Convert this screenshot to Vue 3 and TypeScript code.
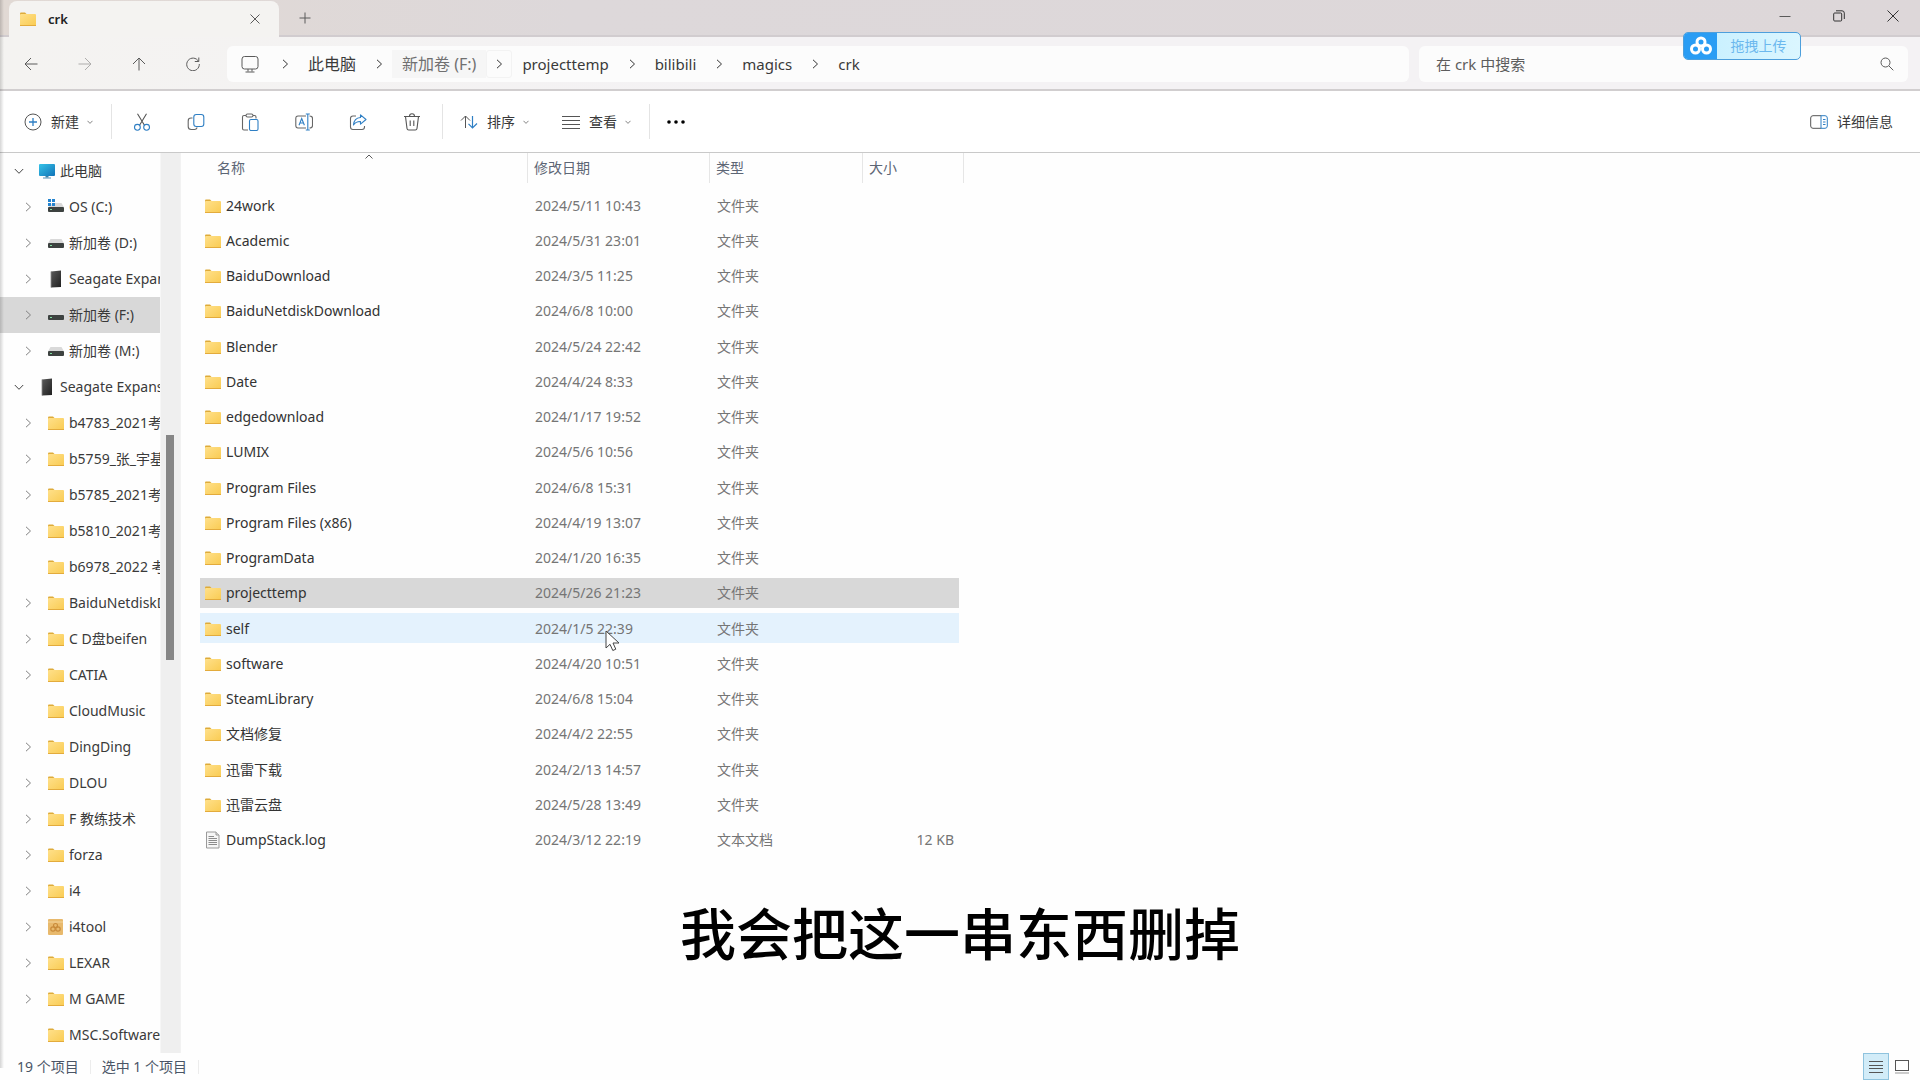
<script setup lang="ts">
import { ref } from 'vue'

interface TreeNode {
  label: string
  icon: string
  level: 1 | 2
  state: 'open' | 'closed' | 'leaf'
}

interface FileRow {
  name: string
  date: string
  type: string
  size: string
  icon: string
}

const folder = (label: string, state: 'closed' | 'leaf' = 'closed'): TreeNode => ({ label, icon: 'folder', level: 2, state })

const tree: TreeNode[] = [
  { label: '此电脑', icon: 'pc', level: 1, state: 'open' },
  { label: 'OS (C:)', icon: 'osdrive', level: 2, state: 'closed' },
  { label: '新加卷 (D:)', icon: 'drive', level: 2, state: 'closed' },
  { label: 'Seagate Expansion Drive (E:)', icon: 'external', level: 2, state: 'closed' },
  { label: '新加卷 (F:)', icon: 'drive', level: 2, state: 'closed' },
  { label: '新加卷 (M:)', icon: 'drive', level: 2, state: 'closed' },
  { label: 'Seagate Expansion Drive (E:)', icon: 'external', level: 1, state: 'open' },
  folder('b4783_2021考'),
  folder('b5759_张_宇基'),
  folder('b5785_2021考'),
  folder('b5810_2021考'),
  folder('b6978_2022 考', 'leaf'),
  folder('BaiduNetdiskDownload'),
  folder('C D盘beifen'),
  folder('CATIA'),
  folder('CloudMusic', 'leaf'),
  folder('DingDing'),
  folder('DLOU'),
  folder('F 教练技术'),
  folder('forza'),
  folder('i4'),
  { label: 'i4tool', icon: 'package', level: 2, state: 'closed' },
  folder('LEXAR'),
  folder('M GAME'),
  folder('MSC.Software', 'leaf'),
]

const dir = (name: string, date: string): FileRow => ({ name, date, type: '文件夹', size: '', icon: 'folder' })

const files: FileRow[] = [
  dir('24work', '2024/5/11 10:43'),
  dir('Academic', '2024/5/31 23:01'),
  dir('BaiduDownload', '2024/3/5 11:25'),
  dir('BaiduNetdiskDownload', '2024/6/8 10:00'),
  dir('Blender', '2024/5/24 22:42'),
  dir('Date', '2024/4/24 8:33'),
  dir('edgedownload', '2024/1/17 19:52'),
  dir('LUMIX', '2024/5/6 10:56'),
  dir('Program Files', '2024/6/8 15:31'),
  dir('Program Files (x86)', '2024/4/19 13:07'),
  dir('ProgramData', '2024/1/20 16:35'),
  dir('projecttemp', '2024/5/26 21:23'),
  dir('self', '2024/1/5 22:39'),
  dir('software', '2024/4/20 10:51'),
  dir('SteamLibrary', '2024/6/8 15:04'),
  dir('文档修复', '2024/4/2 22:55'),
  dir('迅雷下载', '2024/2/13 14:57'),
  dir('迅雷云盘', '2024/5/28 13:49'),
  { name: 'DumpStack.log', date: '2024/3/12 22:19', type: '文本文档', size: '12 KB', icon: 'text' },
]

const crumbs = [
  { label: '此电脑', cjk: true },
  { label: '新加卷 (F:)', cjk: true, hot: true },
  { label: 'projecttemp' },
  { label: 'bilibili' },
  { label: 'magics' },
  { label: 'crk' },
]

const tools = [
  { icon: 'cut', label: '剪切' },
  { icon: 'copy', label: '复制' },
  { icon: 'paste', label: '粘贴' },
  { icon: 'rename', label: '重命名' },
  { icon: 'share', label: '共享' },
  { icon: 'trash', label: '删除' },
]

const treeSelected = ref(4)
const selected = ref(11)
const hovered = ref(12)
const query = ref('')
</script>

<template>
  <div class="window">
    <svg class="defs" aria-hidden="true">
      <defs>
        <linearGradient id="gFolder" x1="0" y1="0" x2="1" y2="1">
          <stop offset="0" stop-color="#ffe08a" />
          <stop offset="1" stop-color="#f9cb52" />
        </linearGradient>
        <linearGradient id="gPc" x1="0" y1="0" x2="1" y2="1">
          <stop offset="0" stop-color="#35c3e8" />
          <stop offset="1" stop-color="#1173b8" />
        </linearGradient>
        <linearGradient id="gExt" x1="0" y1="0" x2="1" y2="1">
          <stop offset="0" stop-color="#5a5a5a" />
          <stop offset="1" stop-color="#1f1f1f" />
        </linearGradient>
      </defs>
      <symbol id="folder" viewBox="0 0 18 18">
        <path d="M1 3.500q0-1 1-1h4l1.500 1.500v3H1z" fill="#deab3a" />
        <rect x="1" y="4" width="16" height="12" rx="1" fill="url(#gFolder)" />
        <path d="M1 15.500h16" stroke="#e3ab3c" />
      </symbol>
      <symbol id="pc" viewBox="0 0 18 18">
        <rect x="1" y="2" width="16" height="12" rx="1" fill="url(#gPc)" />
        <path d="M7.500 14h3v1.500h-3z" fill="#3a7fa8" />
        <path d="M5 16h8" stroke="#5590b5" />
      </symbol>
      <symbol id="drive" viewBox="0 0 18 18">
        <path d="M3.500 5h11L17 9.500H1z" fill="#d9d9d9" />
        <rect x="1" y="9" width="16" height="5" rx="1" fill="#3d4240" />
        <rect x="3" y="11" width="2" height="1" fill="#7fe0a0" />
      </symbol>
      <symbol id="osdrive" viewBox="0 0 18 18">
        <path d="M6 5h8.500L17 9.500H1z" fill="#d9d9d9" />
        <rect x="1" y="9" width="16" height="5" rx="1" fill="#3d4240" />
        <rect x="3" y="11" width="2" height="1" fill="#7fe0a0" />
        <path d="M1 1h3v3H1zM5 1h3v3H5zM1 5h3v3H1zM5 5h3v3H5z" fill="#2484cf" />
      </symbol>
      <symbol id="external" viewBox="0 0 18 18">
        <path d="M4 1.500 14 .5v16.500l-10 .5z" fill="url(#gExt)" />
        <path d="M4 1.500v16" stroke="#8a8a8a" stroke-width=".8" />
      </symbol>
      <symbol id="package" viewBox="0 0 18 18">
        <rect x="1" y="1" width="15" height="16" rx="1" fill="#e8b96c" />
        <path d="M1 4h15" stroke="#f3d49b" />
        <g fill="none" stroke="#c88a3a" stroke-width="1.200">
          <circle cx="6" cy="11" r="2.200" /><circle cx="11" cy="11" r="2.200" /><circle cx="8.500" cy="7.500" r="2" />
        </g>
      </symbol>
      <symbol id="text" viewBox="0 0 18 18">
        <path d="M2.500 1h9.500l3 3v13H2.500z" fill="#f6f6f6" stroke="#9a9a9a" />
        <path d="M12 1v3h3" fill="#ddd" stroke="#9a9a9a" />
        <path d="M4.500 5.500h5.500M4.500 7.500h8.500M4.500 9.500h8.500M4.500 11.500h8.500M4.500 13.500h8.500" stroke="#8c8c8c" />
      </symbol>
      <symbol id="cut" viewBox="0 0 18 18">
        <path d="M4.500.8 11.600 12.500M13.500.8 6.400 12.500" stroke="#555" />
        <circle cx="4.400" cy="14.300" r="2.900" stroke="#2f7fc4" /><circle cx="13.600" cy="14.300" r="2.900" stroke="#2f7fc4" />
      </symbol>
      <symbol id="copy" viewBox="0 0 18 18">
        <path d="M5.500 5H4Q1.200 5 1.200 8v5.500q0 3 3 3h3.300q2 0 2.700-2" stroke="#666" />
        <rect x="6.800" y="1.500" width="10" height="12" rx="2.500" stroke="#2f7fc4" />
      </symbol>
      <symbol id="paste" viewBox="0 0 18 18">
        <path d="M5 2.500H3q-1.500 0-1.500 1.500v11.500q0 1.500 1.500 1.500h4M12 2.500h1.500q1.500 0 1.500 1.500v1.500" stroke="#666" />
        <rect x="5" y="1" width="7" height="3" rx="1.500" stroke="#666" />
        <rect x="8.500" y="6.500" width="8.500" height="11" rx="1.500" stroke="#2f7fc4" />
      </symbol>
      <symbol id="rename" viewBox="0 0 18 18">
        <path d="M11 3H3Q.8 3 .8 5.500v7Q.8 15 3 15h8M14.500 3q3 0 3 2.500v7q0 2.500-3 2.500" stroke="#666" />
        <path d="M12.800 1.500v15M10.800 1h4M10.800 17h4" stroke="#2f7fc4" />
        <path d="M4 12.300 6.700 5.500 9.400 12.300M5 10h3.500" stroke="#2f7fc4" />
      </symbol>
      <symbol id="share" viewBox="0 0 18 18">
        <path d="M7 3H4Q1.500 3 1.500 5.500v8.500q0 2.500 2.500 2.500h9q2.500 0 2.500-2.500v-1" stroke="#666" />
        <path d="M11.500 1.800 17 6.500l-5.500 4.700V8.500Q7 8.300 4.500 12 5 5 11.500 4.500z" stroke="#2f7fc4" stroke-linejoin="round" />
      </symbol>
      <symbol id="trash" viewBox="0 0 18 18">
        <path d="M1 3.500h16M6.500 3.200q0-2.400 2.500-2.400t2.500 2.400M2.500 3.500 4 15.500q.2 1.500 1.700 1.500h6.600q1.500 0 1.700-1.500l1.500-12M7.200 7.500v5.500M10.800 7.500v5.500" stroke="#555" />
      </symbol>
      <symbol id="chev" viewBox="0 0 10 10"><path d="M3 .8 7.500 5 3 9.200" /></symbol>
      <symbol id="chevdown" viewBox="0 0 10 10"><path d="M.8 3 5 7.300 9.200 3" /></symbol>
    </svg>

    <header class="titlebar">
      <div class="tab">
        <svg class="i18"><use href="#folder" /></svg>
        <span class="tab-name">crk</span>
        <button class="plain tab-close" aria-label="关闭标签页">
          <svg class="line" width="10" height="10" viewBox="0 0 10 10"><path d="M.5.5l9 9M9.500.5l-9 9" /></svg>
        </button>
      </div>
      <button class="plain newtab" aria-label="新标签页">
        <svg class="line" width="12" height="12" viewBox="0 0 12 12"><path d="M6 .5v11M.5 6h11" /></svg>
      </button>
      <div class="caption-buttons">
        <button class="plain" aria-label="最小化"><svg class="line" width="12" height="12" viewBox="0 0 12 12"><path d="M.5 6.500h11" /></svg></button>
        <button class="plain" aria-label="还原">
          <svg class="line dark" width="12" height="12" viewBox="0 0 12 12"><rect x=".7" y="3" width="8" height="8" rx="1" /><path d="M3 .8h6q2.300 0 2.300 2.300V9" /></svg>
        </button>
        <button class="plain" aria-label="关闭"><svg class="line dark" width="12" height="12" viewBox="0 0 12 12"><path d="M.5.5l11 11M11.500.5l-11 11" /></svg></button>
      </div>
    </header>

    <div class="navbar">
      <div class="nav-buttons">
        <button class="plain" aria-label="后退"><svg class="line" width="14" height="14" viewBox="0 0 14 14"><path d="M13.500 7H1M7 1 1 7l6 6" /></svg></button>
        <button class="plain faded" aria-label="前进"><svg class="line" width="14" height="14" viewBox="0 0 14 14"><path d="M.5 7H13M7 1l6 6-6 6" /></svg></button>
        <button class="plain" aria-label="向上"><svg class="line" width="14" height="14" viewBox="0 0 14 14"><path d="M7 13.500V1M1 7l6-6 6 6" /></svg></button>
        <button class="plain" aria-label="刷新"><svg class="line" width="14" height="14" viewBox="0 0 14 14"><path d="M12.500 4.300A6.300 6.300 0 1 0 13.300 7M12.800.5v4H8.800" /></svg></button>
      </div>
      <nav class="address" aria-label="地址栏">
        <button class="plain crumb root" aria-label="位置">
          <svg width="18" height="18" viewBox="0 0 18 18" class="line"><rect x="1" y="1.500" width="16" height="12.500" rx="2.500" /><path d="M7 14v2.500M11 14v2.500M4.500 17h9" /></svg>
        </button>
        <template v-for="(c, n) in crumbs" :key="c.label">
          <span class="sep" :class="{ boxed: n === 2 }"><svg class="line dark" width="10" height="10"><use href="#chev" /></svg></span>
          <button class="plain crumb" :class="{ cjk: c.cjk, hot: c.hot }">{{ c.label }}</button>
        </template>
      </nav>
      <label class="search">
        <input v-model="query" type="text" placeholder="在 crk 中搜索" aria-label="在 crk 中搜索" />
        <svg class="line" width="14" height="14" viewBox="0 0 14 14"><circle cx="5.500" cy="5.500" r="4.500" /><path d="M9 9l4.300 4.300" /></svg>
      </label>
    </div>

    <button class="upload">
      <span class="upload-logo">
        <svg width="24" height="20" viewBox="0 0 24 20" fill="none" stroke="#fff" stroke-width="3">
          <circle cx="12" cy="6" r="4" /><circle cx="6.500" cy="13" r="4" /><circle cx="17.500" cy="13" r="4" />
        </svg>
      </span>
      <span class="upload-text">拖拽上传</span>
    </button>

    <div class="toolbar">
      <button class="plain tool first">
        <svg width="18" height="18" viewBox="0 0 18 18" fill="none"><circle cx="9" cy="9" r="8" stroke="#555" /><path d="M9 5v8M5 9h8" stroke="#2f7fc4" stroke-width="1.300" /></svg>
        <span>新建</span><svg class="line tiny" width="6" height="6"><use href="#chevdown" /></svg>
      </button>
      <i class="rule"></i>
      <button v-for="t in tools" :key="t.icon" class="plain icon-tool" :aria-label="t.label">
        <svg width="18" height="18" fill="none" stroke-width="1.100"><use :href="'#' + t.icon" /></svg>
      </button>
      <i class="rule"></i>
      <button class="plain tool">
        <svg width="18" height="18" viewBox="0 0 18 18" fill="none"><path d="M5.500 15V3M1 7.500 5.500 3 10 7.500" stroke="#555" /><path d="M12.500 3v12M8.500 10.800l4 4.200 4.500-4.500" stroke="#2f7fc4" stroke-width="1.200" /></svg>
        <span>排序</span><svg class="line tiny" width="6" height="6"><use href="#chevdown" /></svg>
      </button>
      <button class="plain tool">
        <svg width="18" height="18" viewBox="0 0 18 18" fill="none"><path d="M0 3.500h18M0 7.500h18M0 11.500h18M0 15.500h18" stroke="#555" /></svg>
        <span>查看</span><svg class="line tiny" width="6" height="6"><use href="#chevdown" /></svg>
      </button>
      <i class="rule"></i>
      <button class="plain icon-tool more" aria-label="更多"><svg width="18" height="4" viewBox="0 0 18 4"><circle cx="2" cy="2" r="1.800" /><circle cx="9" cy="2" r="1.800" /><circle cx="16" cy="2" r="1.800" /></svg></button>
      <button class="plain tool details">
        <svg width="18" height="14" viewBox="0 0 18 14" fill="none"><path d="M11 .7H3Q.7.7.7 3v8q0 2.300 2.300 2.300h8" stroke="#555" /><path d="M11 .7h4q2.300 0 2.300 2.300v8q0 2.300-2.300 2.300h-4zM13 4.500h2.500M13 7h2.500M13 9.500h2.500" stroke="#2f7fc4" /></svg>
        <span>详细信息</span>
      </button>
    </div>

    <div class="body">
      <nav class="tree" aria-label="导航窗格">
        <ul>
          <li v-for="(n, k) in tree" :key="k">
            <button class="plain node" :class="['l' + n.level, { on: k === treeSelected }]" @click="treeSelected = k">
              <svg class="line arrow" :class="n.state" width="10" height="10"><use v-if="n.state !== 'leaf'" :href="n.state === 'open' ? '#chevdown' : '#chev'" /></svg>
              <svg class="i18"><use :href="'#' + n.icon" /></svg>
              <span>{{ n.label }}</span>
            </button>
          </li>
        </ul>
      </nav>
      <div class="scroll" aria-hidden="true"><i class="before"></i><i class="thumb"></i><i class="after"></i></div>

      <main class="files">
        <table>
          <colgroup><col class="c-name" /><col class="c-date" /><col class="c-type" /><col class="c-size" /></colgroup>
          <thead>
            <tr>
              <th scope="col"><span>名称</span><svg class="line sort" width="8" height="5" viewBox="0 0 8 5"><path d="M.5 4.500 4 1l3.500 3.500" /></svg></th>
              <th scope="col"><span>修改日期</span></th>
              <th scope="col"><span>类型</span></th>
              <th scope="col"><span>大小</span></th>
            </tr>
          </thead>
          <tbody>
            <tr v-for="(f, k) in files" :key="f.name" :class="{ selected: k === selected, hovered: k === hovered }" @click="selected = k">
              <td><div class="name"><svg class="i18"><use :href="'#' + f.icon" /></svg><span>{{ f.name }}</span></div></td>
              <td>{{ f.date }}</td>
              <td>{{ f.type }}</td>
              <td>{{ f.size }}</td>
            </tr>
          </tbody>
        </table>
      </main>
    </div>

    <footer class="status">
      <span>19 个项目</span><i></i><span>选中 1 个项目</span><i></i>
      <div class="views">
        <button class="plain view active" aria-label="详细信息视图"><svg width="14" height="12" viewBox="0 0 14 12" stroke="#555"><path d="M0 .5h14M0 4.500h14M0 7.500h14M0 11.500h14" /></svg></button>
        <button class="plain view" aria-label="大图标视图"><svg width="14" height="14" viewBox="0 0 14 14" fill="none" stroke="#555"><rect x=".5" y=".5" width="13" height="10" /><path d="M0 13h14" stroke="#999" /></svg></button>
      </div>
    </footer>

    <p class="subtitle">我会把这一串东西删掉</p>
    <svg class="cursor" width="16" height="22" viewBox="0 0 16 22"><path d="M1 1v17l4-3.700 2.800 6.200 3-1.300L8 13h6z" fill="#fff" stroke="#444" /></svg>
    <i class="edge"></i>
  </div>
</template>

<style>
body {
  margin: 0;
  background: #fefefe;
}
</style>

<style scoped>
.window {
  position: relative;
  display: flex;
  flex-direction: column;
  height: 100vh;
  overflow: hidden;
  background: #fefefe;
  color: #3a3a3a;
  font: 14px/20px "Noto Sans", "Noto Sans CJK SC", sans-serif;
}
* {
  box-sizing: border-box;
}
.defs {
  position: absolute;
  width: 0;
  height: 0;
}
.plain {
  display: flex;
  align-items: center;
  margin: 0;
  padding: 0;
  border: 0;
  background: none;
  color: inherit;
  font: inherit;
  white-space: nowrap;
}
svg {
  flex: none;
}
.i18 {
  width: 18px;
  height: 18px;
}
.line {
  fill: none;
  stroke: #5a5a5a;
}
.dark {
  stroke: #333;
}
.tiny {
  stroke: #777;
  stroke-width: 1.5;
}

.titlebar {
  display: flex;
  flex: none;
  height: 37px;
  padding-left: 9px;
  background: linear-gradient(90deg, #e1d9d4, #ddd8da 30%, #ddd7d9);
  border-bottom: 2px solid #d1cccf;
}
.tab {
  display: flex;
  align-items: center;
  width: 270px;
  height: 37px;
  margin-top: 1px;
  padding: 0 19px 2px 10px;
  border-radius: 8px 8px 0 0;
  background: #f4f3f1;
}
.tab-name {
  margin-left: 11px;
  color: #222;
  font-size: 13px;
  font-weight: 600;
}
.tab-close {
  margin-left: auto;
}
.newtab {
  width: 52px;
  justify-content: center;
}
.caption-buttons {
  display: flex;
  margin-left: auto;
  padding-bottom: 3px;
}
.caption-buttons button {
  justify-content: center;
  width: 54px;
}

.navbar {
  display: flex;
  flex: none;
  align-items: center;
  height: 54px;
  padding-top: 1px;
  padding-right: 12px;
  background: linear-gradient(90deg, #f4f3f1, #f4f2f4 40%);
  border-bottom: 2px solid #d1cecf;
}
.nav-buttons {
  display: flex;
  width: 227px;
  padding-left: 4px;
}
.nav-buttons button {
  justify-content: center;
  width: 54px;
  height: 36px;
}
.faded {
  opacity: .45;
}
.address {
  display: flex;
  flex: 1;
  align-items: center;
  height: 36px;
  padding-left: 4px;
  border-radius: 6px;
  background: #fcfcfc;
}
.crumb {
  height: 28px;
  padding: 0 10px;
  font-size: 15px;
}
.crumb.root {
  padding-right: 13px;
}
.crumb.cjk {
  font-size: 16px;
}
.crumb.hot {
  background: #f6f6f6;
  color: #707070;
}
.sep {
  display: flex;
  align-items: center;
  justify-content: center;
  width: 26px;
  height: 28px;
}
.boxed {
  border: 1px solid #f3f3f3;
  border-radius: 3px;
}
.search {
  display: flex;
  align-items: center;
  width: 489px;
  height: 36px;
  margin-left: 10px;
  padding: 0 14px 0 17px;
  border-radius: 6px;
  background: #fcfcfc;
}
.search input {
  flex: 1;
  min-width: 0;
  padding: 0;
  border: 0;
  outline: 0;
  background: none;
  color: #444;
  font: inherit;
  font-size: 15px;
}
.search input::placeholder {
  color: #5c5c5c;
}

.upload {
  position: absolute;
  top: 32px;
  right: 119px;
  display: flex;
  width: 118px;
  height: 28px;
  padding: 0;
  overflow: hidden;
  border: 1px solid #4d9fdc;
  border-radius: 5px;
  background: linear-gradient(90deg, #c4efff, #dbf6ff);
  color: #6cb8ee;
  font: inherit;
}
.upload-logo {
  display: flex;
  align-items: center;
  justify-content: center;
  width: 33px;
  height: 100%;
  background: #2a9df4;
}
.upload-text {
  flex: 1;
  line-height: 26px;
}

.toolbar {
  display: flex;
  flex: none;
  align-items: center;
  height: 62px;
  border-bottom: 1px solid #c9c9c9;
  background: #fff;
}
.tool {
  padding: 0 15px 0 18px;
}
.tool.first {
  padding-left: 24px;
}
.tool span {
  margin-left: 9px;
}
.tool .tiny {
  margin-left: 8px;
}
.rule {
  width: 1px;
  height: 35px;
  margin: 0 3px;
  background: #e4e4e4;
}
.icon-tool {
  justify-content: center;
  width: 54px;
  height: 36px;
}
.icon-tool.more {
  width: 46px;
}
.rule + .tool {
  padding-left: 14px;
}
.tool.details {
  margin-left: auto;
  padding-right: 27px;
}

.body {
  display: flex;
  flex: 1;
  min-height: 0;
}
.tree {
  width: 160px;
  overflow: hidden;
}
.tree ul {
  margin: 0;
  padding: 0;
  list-style: none;
}
.node {
  width: 100%;
  height: 36px;
  padding-left: 14px;
}
.node.l2 {
  padding-left: 23px;
}
.node .i18 {
  margin: 0 4px 0 14px;
}
.node.on {
  background: #d8d8d8;
}
.arrow.open {
  stroke: #444;
}
.arrow.closed {
  stroke: #808080;
}
.scroll {
  display: flex;
  flex-direction: column;
  align-items: center;
  width: 20px;
  padding-right: 1px;
  border-left: 1px solid #f6f6f6;
  background: #efefef;
}
.before {
  flex: 282;
}
.thumb {
  flex: 225;
  width: 8px;
  background: #868686;
}
.after {
  flex: 393;
}
.files {
  flex: 1;
  padding-left: 19px;
  border-left: 1px solid #f2f2f2;
}
table {
  width: 764px;
  height: 705px;
  border-spacing: 0;
  table-layout: fixed;
}
.c-name {
  width: 328px;
}
.c-date {
  width: 182px;
}
.c-type {
  width: 153px;
}
.c-size {
  width: 101px;
}
th {
  position: relative;
  height: 35px;
  padding: 0;
  color: #5d6675;
  font-weight: 400;
  text-align: left;
  vertical-align: top;
}
th span {
  display: block;
  height: 30px;
  padding-left: 6px;
  border-right: 1px solid #e6e6e6;
  line-height: 30px;
}
th:first-child span {
  padding-left: 17px;
}
.sort {
  position: absolute;
  top: 1px;
  left: 165px;
}
td {
  padding: 1px 0 0 7px;
  border-top: 2px solid transparent;
  border-bottom: 3px solid transparent;
  background-clip: padding-box;
  color: #757575;
}
td:first-child {
  padding-left: 4px;
  color: #333;
}
td:last-child {
  padding-right: 5px;
  border-right: 5px solid transparent;
  text-align: right;
}
.name {
  display: flex;
  align-items: center;
}
.name span {
  margin-left: 4px;
}
.selected td {
  background-color: #d8d8d8;
}
.hovered td {
  background-color: #e4f2fd;
}

.status {
  display: flex;
  flex: none;
  align-items: center;
  height: 27px;
  padding: 0 5px 0 17px;
  color: #4a5566;
}
.status i {
  width: 1px;
  height: 14px;
  margin: 0 11px;
  background: #ececec;
}
.views {
  display: flex;
  height: 100%;
  margin-left: auto;
}
.view {
  justify-content: center;
  width: 26px;
  height: 27px;
}
.view.active {
  border: 1px solid #8fc3de;
  background: #d2ecf8;
}

.subtitle {
  position: absolute;
  right: 0;
  bottom: 114px;
  left: 0;
  margin: 0;
  color: #000;
  font: 500 56px/70px "Noto Sans CJK SC", sans-serif;
  text-align: center;
  pointer-events: none;
}
.cursor {
  position: absolute;
  top: 630px;
  left: 605px;
  pointer-events: none;
}
.edge {
  position: absolute;
  top: 0;
  bottom: 12px;
  left: 0;
  width: 4px;
  background: linear-gradient(90deg, rgba(0, 0, 0, .16), transparent);
  pointer-events: none;
}
</style>
